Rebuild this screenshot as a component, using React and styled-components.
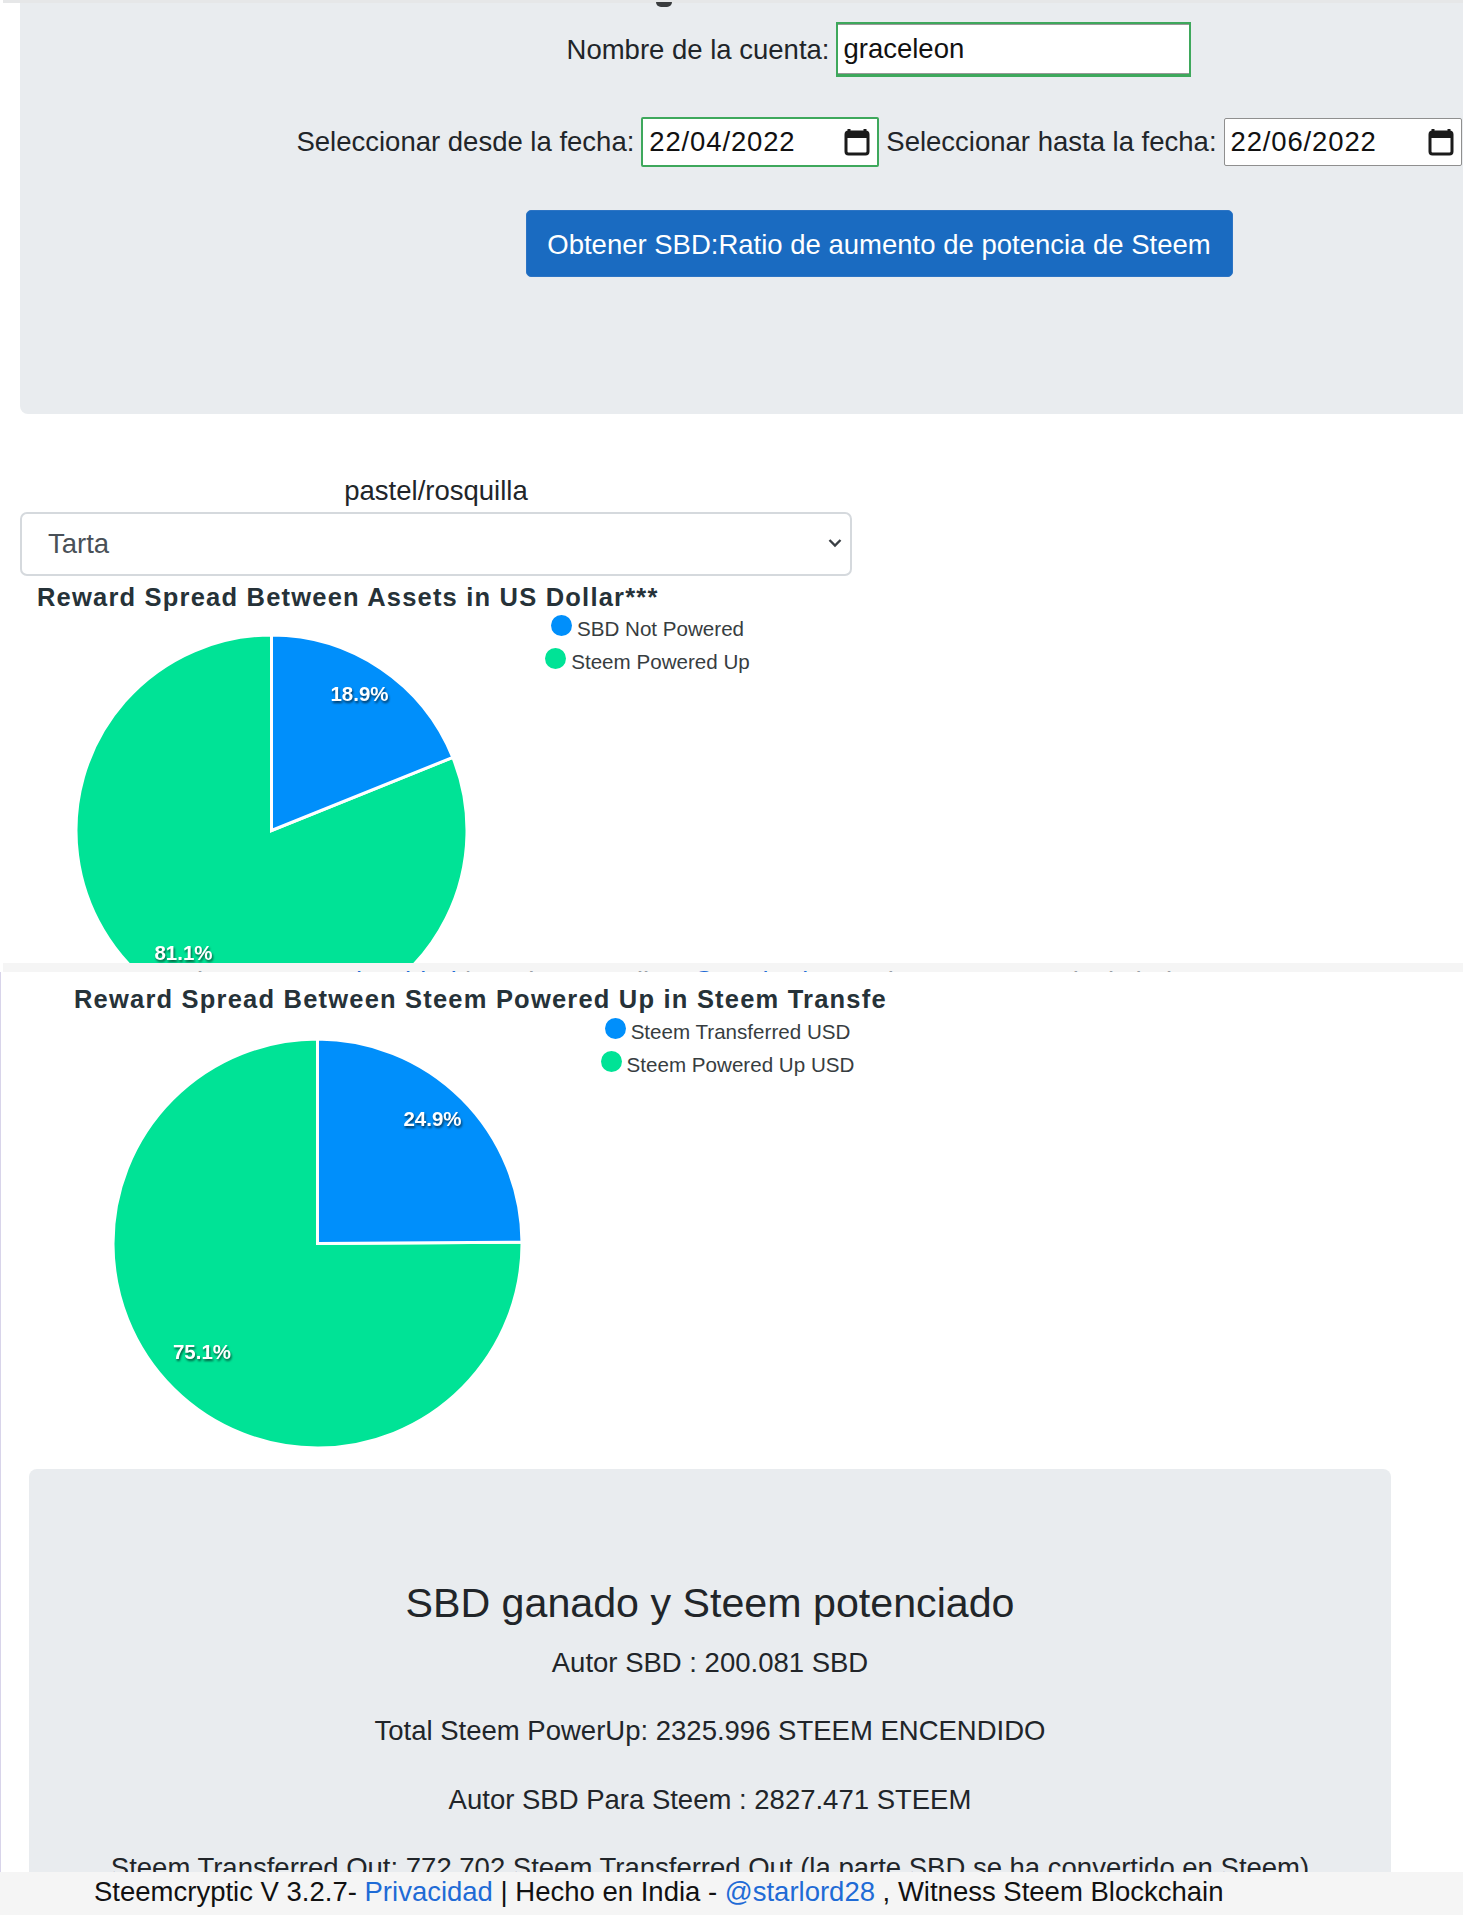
import React from "react";
import styled, { createGlobalStyle } from "styled-components";

const GlobalStyle = createGlobalStyle`
  html, body {
    margin: 0;
    padding: 0;
    background: #fff;
  }
  #root {
    height: 1915px;
    overflow: hidden;
    position: relative;
  }
  * {
    box-sizing: border-box;
  }
`;

const BLUE = "#008ffb";
const GREEN = "#00e396";

const Page = styled.div`
  font-family: "Liberation Sans", Arial, sans-serif;
  font-size: 27.5px;
  color: #212529;
`;

const TopLine = styled.div`
  height: 3px;
  margin-left: 3px;
  background: #e6e7e8;
`;

const Panel = styled.section`
  position: relative;
  margin-left: 20px;
  height: 411px;
  padding: 19px 0 0 275px;
  background: #e9ecef;
  border-bottom-left-radius: 8px;
`;

const HeadingCrumb = styled.i`
  position: absolute;
  left: 636px;
  top: -1px;
  width: 16px;
  height: 5px;
  border-radius: 0 0 8px 8px;
  background: #3a3c3e;
`;

const FormRow = styled.div`
  display: flex;
  justify-content: center;
  align-items: center;
  gap: 7px;
  margin-bottom: ${(p) => p.$gap}px;
`;

const Label = styled.label`
  white-space: nowrap;
`;

const NameInput = styled.input`
  width: 355px;
  height: 55px;
  padding: 0 5px;
  font: inherit;
  color: #111;
  background: #fff;
  border: 2px solid #3ea85c;
  border-bottom-width: 3px;
  box-shadow: inset 0 -1px 0 #999, inset 0 1px 0 #999;
`;

const DateBox = styled.div`
  display: flex;
  align-items: center;
  justify-content: space-between;
  width: 238px;
  height: ${(p) => (p.$valid ? 50 : 48)}px;
  padding: 0 7px 0 6px;
  letter-spacing: 0.85px;
  color: #111;
  background: #fff;
  border: ${(p) => (p.$valid ? "2px solid #3ea85c" : "1px solid #8f8f8f")};
  border-radius: 2px;
`;

const SubmitButton = styled.button`
  display: block;
  width: 707px;
  height: 67px;
  margin: 0 auto;
  padding: 3px 0 0;
  font: inherit;
  color: #fff;
  background: #1a6bc1;
  border: 1px solid #2c74c4;
  border-radius: 5px;
`;

const PickerBlock = styled.div`
  width: 832px;
  margin: 59px 0 0 20px;
  text-align: center;
`;

const PickerLabel = styled.div`
  height: 39px;
  line-height: 36px;
`;

const SelectWrap = styled.div`
  position: relative;
`;

const ChartSelect = styled.select`
  display: block;
  width: 100%;
  height: 64px;
  padding: 0 40px 2px 26px;
  font: inherit;
  color: #495057;
  background: #fff;
  border: 2px solid #d5d9dd;
  border-radius: 7px;
  appearance: none;
`;

const SelectChevron = styled.svg`
  position: absolute;
  right: 10px;
  top: 26px;
  pointer-events: none;
`;

const ChartTitle = styled.div`
  height: 36px;
  padding-left: ${(p) => p.$left}px;
  line-height: 42px;
  font-size: 25.5px;
  font-weight: 700;
  letter-spacing: 1.2px;
  white-space: nowrap;
  color: #263238;
`;

const ChartBody = styled.div`
  display: flex;
  align-items: flex-start;
  height: ${(p) => p.$height}px;
  overflow: hidden;
`;

const PieSvg = styled.svg`
  flex: none;
  margin: ${(p) => p.$top}px 0 0 ${(p) => p.$left}px;
  overflow: visible;
`;

const PieLabel = styled.text`
  font-size: 20.5px;
  font-weight: 700;
  fill: #fff;
  text-anchor: middle;
  filter: drop-shadow(1px 2px 1px rgba(0, 0, 0, 0.6));
`;

const Legend = styled.div`
  flex: none;
  display: flex;
  flex-direction: column;
  align-items: center;
  gap: 9px;
  width: ${(p) => p.$width}px;
  margin: ${(p) => p.$top}px 0 0 ${(p) => p.$left}px;
  font-size: 20.6px;
  line-height: 24px;
  color: #373d3f;
`;

const LegendItem = styled.div`
  display: flex;
  gap: 5px;
  white-space: nowrap;
`;

const LegendDot = styled.span`
  flex: none;
  width: 21px;
  height: 21px;
  margin-top: -2px;
  border-radius: 50%;
  background: ${(p) => p.$color};
`;

const GhostFooter = styled.div`
  height: 9px;
  margin-left: 3px;
  padding: 3px 0 0 55px;
  overflow: hidden;
  line-height: 32px;
  white-space: nowrap;
  color: #9aa0a6;
  background: #f5f5f5;
`;

const SecondShot = styled.div`
  border-left: 1px solid #d8d4ea;
  padding-top: 6px;
`;

const SummaryPanel = styled.section`
  width: 1362px;
  height: 460px;
  margin: 21px 0 0 28px;
  padding-top: 105px;
  text-align: center;
  background: #e9ecef;
  border-radius: 8px 8px 0 0;
`;

const SummaryHeading = styled.h2`
  margin: 0 0 15px;
  font-size: 41.2px;
  font-weight: 400;
  line-height: 58px;
`;

const SummaryLine = styled.p`
  margin: 0;
  height: 68.3px;
  line-height: 32px;
`;

const Footer = styled.footer`
  position: absolute;
  left: 0;
  right: 0;
  bottom: 0;
  height: 43px;
  padding-left: 94px;
  line-height: 40px;
  white-space: nowrap;
  color: #111;
  background: #f5f5f5;
`;

const FooterLink = styled.a`
  color: #1f6bd6;
  text-decoration: none;
`;

const CalendarIcon = () => (
  <svg width="26" height="28" viewBox="0 0 26 28" fill="none">
    <path d="M5 1v3M21 1v3" stroke="#1b1b1b" strokeWidth="3" />
    <rect x="2" y="4" width="22" height="22" rx="2.5" stroke="#1b1b1b" strokeWidth="3" />
    <rect x="2" y="4" width="22" height="6" fill="#1b1b1b" />
  </svg>
);

const Pie = ({ radius, share, labels, top, left }) => {
  const angle = (share / 100) * 2 * Math.PI;
  const c = radius + 1;
  const x = c + radius * Math.sin(angle);
  const y = c - radius * Math.cos(angle);
  const blue = `M${c} ${c}L${c} ${c - radius}A${radius} ${radius} 0 0 1 ${x} ${y}Z`;
  const green = `M${c} ${c}L${x} ${y}A${radius} ${radius} 0 1 1 ${c} ${c - radius}Z`;
  return (
    <PieSvg width={c * 2} height={c * 2} $top={top} $left={left}>
      <path d={green} fill={GREEN} stroke="#fff" strokeWidth="3" />
      <path d={blue} fill={BLUE} stroke="#fff" strokeWidth="3" />
      {labels.map((l) => (
        <PieLabel key={l.text} x={l.x} y={l.y}>
          {l.text}
        </PieLabel>
      ))}
    </PieSvg>
  );
};

const FooterContent = () => (
  <>
    Steemcryptic V 3.2.7- <FooterLink href="#">Privacidad</FooterLink> | Hecho en India -{" "}
    <FooterLink href="#">@starlord28</FooterLink> , Witness Steem Blockchain
  </>
);

const App = () => {
  return (
    <Page>
      <GlobalStyle />
      <TopLine />
      <Panel>
        <HeadingCrumb />
        <FormRow $gap={40}>
          <Label>Nombre de la cuenta:</Label>
          <NameInput defaultValue="graceleon" />
        </FormRow>
        <FormRow $gap={43}>
          <Label>Seleccionar desde la fecha:</Label>
          <DateBox $valid>
            22/04/2022
            <CalendarIcon />
          </DateBox>
          <Label>Seleccionar hasta la fecha:</Label>
          <DateBox>
            22/06/2022
            <CalendarIcon />
          </DateBox>
        </FormRow>
        <SubmitButton>Obtener SBD:Ratio de aumento de potencia de Steem</SubmitButton>
      </Panel>

      <PickerBlock>
        <PickerLabel>pastel/rosquilla</PickerLabel>
        <SelectWrap>
          <ChartSelect defaultValue="Tarta">
            <option>Tarta</option>
            <option>Rosquilla</option>
          </ChartSelect>
          <SelectChevron width="14" height="10" viewBox="0 0 14 10" fill="none">
            <path d="M1.5 2l5.5 5.5L12.5 2" stroke="#3a3f44" strokeWidth="2.4" />
          </SelectChevron>
        </SelectWrap>
      </PickerBlock>

      <ChartTitle $left={37}>Reward Spread Between Assets in US Dollar***</ChartTitle>
      <ChartBody $height={351}>
        <Pie
          radius={195.5}
          share={18.9}
          top={21.5}
          left={74.5}
          labels={[
            { text: "18.9%", x: 284.5, y: 67 },
            { text: "81.1%", x: 108.5, y: 326 },
          ]}
        />
        <Legend $top={5} $left={53} $width={254}>
          <LegendItem>
            <LegendDot $color={BLUE} />
            SBD Not Powered
          </LegendItem>
          <LegendItem>
            <LegendDot $color={GREEN} />
            Steem Powered Up
          </LegendItem>
        </Legend>
      </ChartBody>

      <GhostFooter>
        <FooterContent />
      </GhostFooter>

      <SecondShot>
        <ChartTitle $left={73}>Reward Spread Between Steem Powered Up in Steem Transfe</ChartTitle>
        <ChartBody $height={434}>
          <Pie
            radius={204.5}
            share={24.9}
            top={23.5}
            left={110.5}
            labels={[
              { text: "24.9%", x: 320.5, y: 88 },
              { text: "75.1%", x: 90, y: 321 },
            ]}
          />
          <Legend $top={6} $left={76} $width={258}>
            <LegendItem>
              <LegendDot $color={BLUE} />
              Steem Transferred USD
            </LegendItem>
            <LegendItem>
              <LegendDot $color={GREEN} />
              Steem Powered Up USD
            </LegendItem>
          </Legend>
        </ChartBody>

        <SummaryPanel>
          <SummaryHeading>SBD ganado y Steem potenciado</SummaryHeading>
          <SummaryLine>Autor SBD : 200.081 SBD</SummaryLine>
          <SummaryLine>Total Steem PowerUp: 2325.996 STEEM ENCENDIDO</SummaryLine>
          <SummaryLine>Autor SBD Para Steem : 2827.471 STEEM</SummaryLine>
          <SummaryLine>
            Steem Transferred Out: 772.702 Steem Transferred Out (la parte SBD se ha convertido en Steem)
          </SummaryLine>
        </SummaryPanel>
      </SecondShot>

      <Footer>
        <FooterContent />
      </Footer>
    </Page>
  );
};

export default App;
